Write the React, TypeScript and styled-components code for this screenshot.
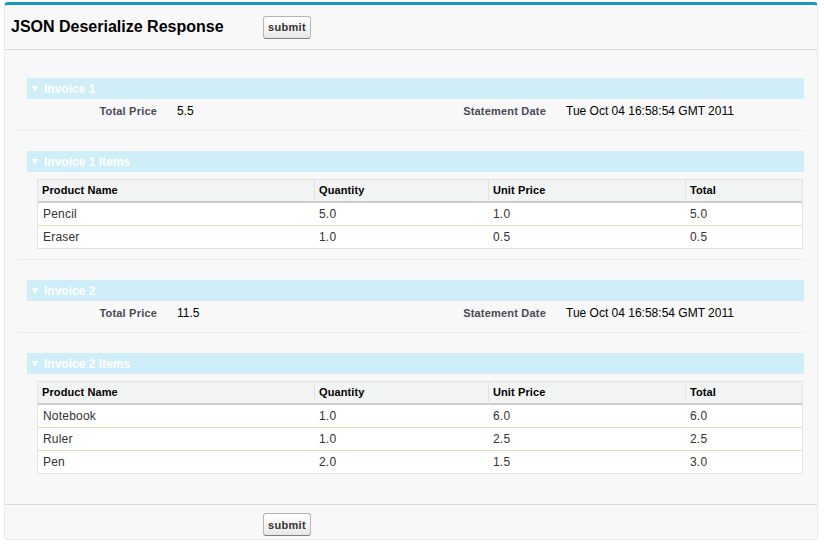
import React from "react";
import styled, { createGlobalStyle } from "styled-components";

const Global = createGlobalStyle`
  html, body { margin: 0; padding: 0; background: #fff; }
  body { font-family: "Liberation Sans", Arial, sans-serif; font-size: 12px; color: #000; }
`;

const Page = styled.div`
  padding: 2px 6px 5px 4px;
`;

const Panel = styled.div`
  background: #f8f8f8;
  border: 1px solid #eaeaea;
  border-top: 3px solid #1797c0;
  border-radius: 4px;
`;

const Bar = styled.div<{ $footer?: boolean }>`
  display: flex;
  align-items: ${(p) => (p.$footer ? "flex-start" : "center")};
  height: ${(p) => (p.$footer ? "35px" : "45px")};
  padding-top: ${(p) => (p.$footer ? "8px" : "0")};
  box-sizing: border-box;
  border-${(p) => (p.$footer ? "top" : "bottom")}: 1px solid #dbdbdb;
`;

const TitleCell = styled.div`
  width: 258px;
  flex: none;
  padding-left: 6px;
  box-sizing: border-box;
`;

const Title = styled.h2`
  margin: 0;
  font-size: 16px;
  font-weight: bold;
  color: #000;
`;

const Button = styled.button`
  height: 23px;
  padding: 0 4px;
  border: 1px solid #b5b5b5;
  border-bottom-color: #7f7f7f;
  border-radius: 3px;
  background: linear-gradient(#ffffff, #f4f4f4 60%, #e6e6e6);
  font-family: "Liberation Sans", Arial, sans-serif;
  font-size: 11px;
  letter-spacing: 0.3px;
  font-weight: bold;
  color: #333;
  cursor: pointer;
`;

const Body = styled.div`
  padding: 28px 11px 20px 12px;
`;

const Section = styled.div<{ $last?: boolean }>`
  border-bottom: ${(p) => (p.$last ? "none" : "1px solid #ececec")};
  margin-bottom: ${(p) => (p.$last ? "0" : "20px")};
`;

const SectionHeader = styled.div`
  margin: 0 2px 0 10px;
  height: 21px;
  background: #cfeef8;
  color: #fff;
  font-weight: bold;
  font-size: 12px;
  display: flex;
  align-items: center;
  gap: 6px;
  padding-left: 5px;
`;

const Twisty = styled.span`
  width: 0;
  height: 0;
  border-left: 3.5px solid transparent;
  border-right: 3.5px solid transparent;
  border-top: 6px solid #fff;
`;

const Fields = styled.div`
  margin: 0 1px 0 10px;
  padding: 3px 0 10px;
  display: grid;
  grid-template-columns: 18% 32% 18% 32%;
  align-items: center;
  height: 18px;
  box-sizing: content-box;
`;

const Label = styled.div`
  text-align: right;
  padding-right: 10px;
  font-size: 11px;
  font-weight: bold;
  letter-spacing: 0.2px;
  color: #4a4a56;
`;

const Value = styled.div`
  padding-left: 10px;
  font-size: 12px;
  color: #000;
`;

const ItemsWrap = styled.div`
  padding: 7px 3px 10px 20px;
`;

const Table = styled.table`
  width: 100%;
  border-collapse: separate;
  border-spacing: 0;
  border: 1px solid #e0e3e5;
  background: #fff;
  table-layout: fixed;
`;

const Th = styled.th<{ $w?: number }>`
  box-sizing: border-box;
  width: ${(p) => (p.$w ? `${p.$w}px` : "auto")};
  padding: 4px 4px;
  line-height: 13px;
  background: #f2f3f3;
  border-left: 1px solid #e0e3e5;
  border-bottom: 2px solid #cccccc;
  text-align: left;
  font-size: 11px;
  font-weight: bold;
  letter-spacing: 0.1px;
  color: #000;
  &:first-child { border-left: none; }
`;

const Tr = styled.tr`
  & + & td { border-top: 1px solid #e3deb8; }
`;

const Td = styled.td`
  padding: 4px 4px 4px 5px;
  line-height: 14px;
  font-size: 12px;
  color: #333;
  letter-spacing: 0.2px;
`;

type Item = { name: string; qty: string; price: string; total: string };
type Invoice = { n: number; total: string; date: string; items: Item[] };

const invoices: Invoice[] = [
  {
    n: 1,
    total: "5.5",
    date: "Tue Oct 04 16:58:54 GMT 2011",
    items: [
      { name: "Pencil", qty: "5.0", price: "1.0", total: "5.0" },
      { name: "Eraser", qty: "1.0", price: "0.5", total: "0.5" },
    ],
  },
  {
    n: 2,
    total: "11.5",
    date: "Tue Oct 04 16:58:54 GMT 2011",
    items: [
      { name: "Notebook", qty: "1.0", price: "6.0", total: "6.0" },
      { name: "Ruler", qty: "1.0", price: "2.5", total: "2.5" },
      { name: "Pen", qty: "2.0", price: "1.5", total: "3.0" },
    ],
  },
];

export default function App() {
  return (
    <Page>
      <Global />
      <Panel>
        <Bar>
          <TitleCell>
            <Title>JSON Deserialize Response</Title>
          </TitleCell>
          <Button>submit</Button>
        </Bar>
        <Body>
          {invoices.map((inv, i) => (
            <React.Fragment key={inv.n}>
              <Section>
                <SectionHeader>
                  <Twisty />
                  Invoice {inv.n}
                </SectionHeader>
                <Fields>
                  <Label>Total Price</Label>
                  <Value>{inv.total}</Value>
                  <Label>Statement Date</Label>
                  <Value>{inv.date}</Value>
                </Fields>
              </Section>
              <Section $last={i === invoices.length - 1}>
                <SectionHeader>
                  <Twisty />
                  Invoice {inv.n} Items
                </SectionHeader>
                <ItemsWrap>
                  <Table>
                    <thead>
                      <tr>
                        <Th $w={276}>Product Name</Th>
                        <Th $w={174}>Quantity</Th>
                        <Th $w={197}>Unit Price</Th>
                        <Th>Total</Th>
                      </tr>
                    </thead>
                    <tbody>
                      {inv.items.map((it) => (
                        <Tr key={it.name}>
                          <Td>{it.name}</Td>
                          <Td>{it.qty}</Td>
                          <Td>{it.price}</Td>
                          <Td>{it.total}</Td>
                        </Tr>
                      ))}
                    </tbody>
                  </Table>
                </ItemsWrap>
              </Section>
            </React.Fragment>
          ))}
        </Body>
        <Bar $footer>
          <TitleCell />
          <Button>submit</Button>
        </Bar>
      </Panel>
    </Page>
  );
}
